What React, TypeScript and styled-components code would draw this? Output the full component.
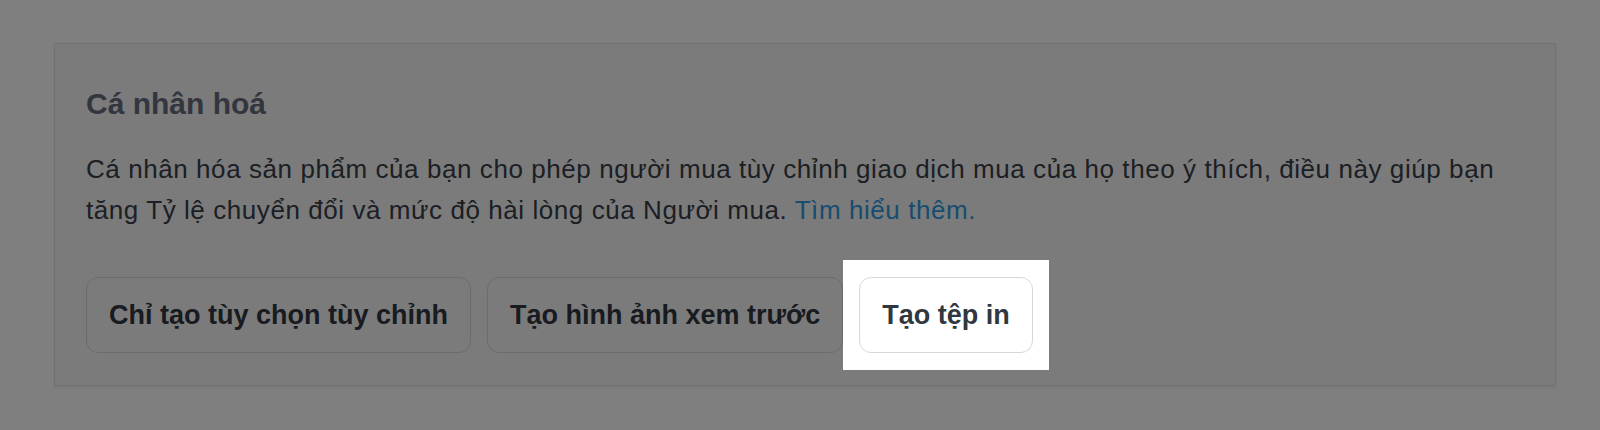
import React from 'react'
import styled, { createGlobalStyle } from 'styled-components'

const GlobalStyle = createGlobalStyle`
  body {
    margin: 0;
    background: #ffffff;
    font-family: "Liberation Sans", Arial, sans-serif;
  }
`

const Page = styled.div`
  padding: 43px 44px 44px 54px;
`

const Card = styled.section`
  background: #f6f6f6;
  border: 1px solid #e3e3e3;
  box-shadow: 0 2px 3px rgba(0, 0, 0, 0.08);
  padding: 42px 31px 32px 31px;
`

const Title = styled.h2`
  margin: 0 0 27px 0;
  font-size: 30px;
  line-height: 36px;
  font-weight: 700;
  color: #676d7d;
`

const Description = styled.p`
  margin: 0 0 46px 0;
  font-size: 26px;
  line-height: 41px;
  letter-spacing: 0.57px;
  color: #383e48;
`

const Link = styled.a`
  color: #2e9ae0;
  text-decoration: none;
`

const Actions = styled.div`
  display: flex;
  gap: 16px;
`

const Spotlight = styled.span`
  position: relative;
  z-index: 1;
  display: inline-flex;

  &::before {
    content: "";
    position: absolute;
    inset: -17px -16px;
    background: #ffffff;
    box-shadow: 0 0 0 4000px rgba(0, 0, 0, 0.5);
    z-index: -1;
  }
`

const Button = styled.button<{ $solid?: boolean }>`
  height: 76px;
  padding: 0 22px;
  border: 1px solid #d6d9dc;
  border-radius: 12px;
  background: ${({ $solid }) => ($solid ? '#ffffff' : 'transparent')};
  font-family: "Liberation Sans", Arial, sans-serif;
  font-size: 27px;
  font-weight: 700;
  color: #30373f;
  cursor: pointer;
  white-space: nowrap;
`

const App: React.FC = () => {
  return (
    <>
      <GlobalStyle />
      <Page>
        <Card>
          <Title>Cá nhân hoá</Title>
          <Description>
            Cá nhân hóa sản phẩm của bạn cho phép người mua tùy chỉnh giao dịch mua của họ theo ý thích, điều này giúp bạn
            tăng Tỷ lệ chuyển đổi và mức độ hài lòng của Người mua. <Link href="#">Tìm hiểu thêm.</Link>
          </Description>
          <Actions>
            <Button>Chỉ tạo tùy chọn tùy chỉnh</Button>
            <Button>Tạo hình ảnh xem trước</Button>
            <Spotlight>
              <Button $solid>Tạo tệp in</Button>
            </Spotlight>
          </Actions>
        </Card>
      </Page>
    </>
  )
}

export default App
